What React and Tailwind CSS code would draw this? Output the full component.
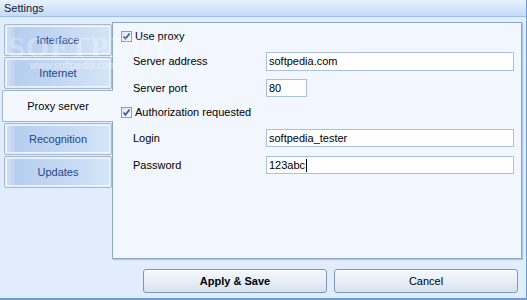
import React from "react";

const font = { fontFamily: '"Liberation Sans", Arial, sans-serif' };

function Tab({ label, selected }) {
  if (selected) {
    return (
      <div className="relative z-10 -mr-px ml-[2px] flex h-[32px] items-center justify-center rounded-l-[2px] border border-r-0 border-[#9fb4d2] bg-[#f3f8ff] text-[11px] text-black">
        {label}
      </div>
    );
  }
  return (
    <div className="ml-[4px] h-[32px] rounded-[2px] border border-[#a6b9d4] p-px">
      <div className="flex h-full rounded-[1px] border border-white/70 bg-gradient-to-r from-[#b4ccee] via-[#c2d7f3] to-[#d4e4f8]">
        <div className="w-[8px] bg-gradient-to-r from-[#cfdef3] to-[#bed3f0]" />
        <div className="flex flex-1 items-center justify-center pr-[8px] text-[11px] text-[#23478a]">{label}</div>
      </div>
    </div>
  );
}

function Check({ label }) {
  return (
    <div className="flex h-[14px] items-center gap-[3px] leading-none">
      <div className="flex h-[11px] w-[11px] items-center justify-center border border-[#8c9db5] bg-gradient-to-br from-[#dfe6ee] to-[#f6f8fa]">
        <svg width="9" height="9" viewBox="0 0 9 9">
          <path d="M1.5 4.5 L3.5 6.8 L7.6 1.5" fill="none" stroke="#3e5f93" strokeWidth="1.7" />
        </svg>
      </div>
      <span className="text-[11px] text-black">{label}</span>
    </div>
  );
}

function Field({ label, value, w = "w-[248px]", h = "h-[19px]", caret }) {
  return (
    <div className="flex items-center leading-none">
      <div className="w-[145px] pl-[12px] text-[11px] text-black">{label}</div>
      <div className={"flex items-center border border-[#a9c0df] bg-white pl-[2px] text-[11px] text-black " + w + " " + h}>
        {value}
        {caret && <span className="ml-px inline-block h-[13px] w-px bg-black" />}
      </div>
    </div>
  );
}

function Btn({ children, bold }) {
  return (
    <div className={"flex h-[24px] w-[184px] items-center justify-center rounded-[3px] border border-[#8196b4] bg-gradient-to-b from-[#f4f8fc] via-[#e8eff8] to-[#d6e2f0] text-[11px] text-black shadow-[inset_0_1px_0_white] " + (bold ? "font-bold" : "")}>
      {children}
    </div>
  );
}

export default function App() {
  return (
    <div style={font} className="relative flex h-[300px] w-[527px] flex-col overflow-hidden border-b-2 border-r border-[#6d9bd4] bg-[#e1edfc]">
      <div className="flex h-[17px] items-center border-b border-[#9cc0ec] bg-gradient-to-b from-[#e8f1fd] to-[#c4dbf8] pl-[4px] text-[11px] text-[#0b1a33]">
        Settings
      </div>
      <div className="flex pt-[5px]">
        <div className="flex w-[112px] flex-col gap-[1px] pt-[2px]">
          <Tab label="Interface" />
          <Tab label="Internet" />
          <Tab label="Proxy server" selected />
          <Tab label="Recognition" />
          <Tab label="Updates" />
        </div>
        <div className="h-[237px] w-[410px] border border-[#8ea6c8] bg-[#f2f7ff] shadow-[1px_1px_1px_rgba(90,120,170,0.35)]">
          <div className="flex flex-col pl-[8px] pt-[6px]">
            <Check label="Use proxy" />
            <div className="mt-[9px]">
              <Field label="Server address" value="softpedia.com" />
            </div>
            <div className="mt-[8px]">
              <Field label="Server port" value="80" w="w-[41px]" h="h-[18px]" />
            </div>
            <div className="mt-[8px]">
              <Check label="Authorization requested" />
            </div>
            <div className="mt-[10px]">
              <Field label="Login" value="softpedia_tester" h="h-[18px]" />
            </div>
            <div className="mt-[9px]">
              <Field label="Password" value="123abc" h="h-[18px]" caret />
            </div>
          </div>
        </div>
      </div>
      <div className="mt-[10px] flex gap-[7px] pl-[143px]">
        <Btn bold>Apply &amp; Save</Btn>
        <Btn>Cancel</Btn>
      </div>
      <div className="pointer-events-none absolute left-[8px] top-[24px] select-none text-[30px] font-bold tracking-[1px] text-white/30" style={{ fontFamily: '"Liberation Serif", serif' }}>
        SOFTPEDIA
      </div>
      <div className="pointer-events-none absolute left-[30px] top-[58px] select-none text-[10px] text-white/50">
        www.softpedia.com
      </div>
    </div>
  );
}
